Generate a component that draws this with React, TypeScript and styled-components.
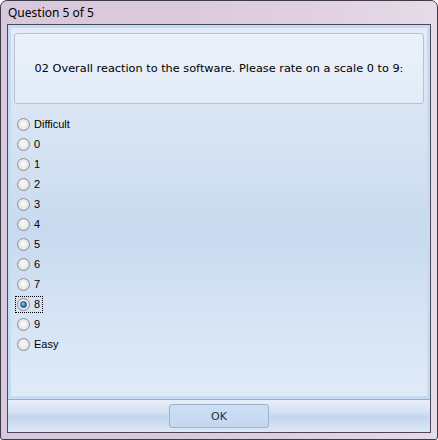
import React from "react";
import styled, { createGlobalStyle } from "styled-components";

const Global = createGlobalStyle`
  html, body { margin: 0; padding: 0; background: #ffffff; }
  body { width: 438px; height: 440px; overflow: hidden; }
`;

const Window = styled.div`
  box-sizing: border-box;
  width: 438px;
  height: 440px;
  border: 1px solid #3d3b45;
  border-radius: 7px 7px 3px 3px;
  background: linear-gradient(90deg, #d8c8de 0%, #dbc9da 40%, #e1d2e1 75%, #e6dbe8 100%);
  display: flex;
  flex-direction: column;
  padding: 0 6px 6px 6px;
  overflow: hidden;
`;

const TitleBar = styled.div`
  height: 23px;
  display: flex;
  align-items: center;
  padding-left: 1px;
  font-family: "Noto Sans", "Open Sans", sans-serif;
  font-size: 12px;
  color: #000;
`;

const Client = styled.div`
  flex: 1;
  border: 1px solid #4a4857;
  display: flex;
  flex-direction: column;
  min-height: 0;
`;

const Content = styled.div`
  box-sizing: border-box;
  height: 374px;
  border: 3px solid #c6dbf4;
  background: linear-gradient(180deg, #e3ecf8 0%, #d6e3f3 30%, #c9daef 55%, #d6e4f5 80%, #e0ebf9 100%);
  padding: 5px 3px 0 3px;
  display: flex;
  flex-direction: column;
  font-family: "Liberation Sans", Arial, sans-serif;
  font-size: 11px;
  color: #000;
`;

const QuestionBox = styled.div`
  box-sizing: border-box;
  height: 71px;
  border: 1px solid #b9c2cd;
  border-radius: 3px;
  background: linear-gradient(180deg, #eaf1fa 0%, #e2ebf7 100%);
  display: flex;
  align-items: center;
  justify-content: center;
  font-family: "DejaVu Sans", Verdana, sans-serif;
  font-size: 11.3px;
  padding-bottom: 1px;
`;

const OptionList = styled.div`
  display: flex;
  flex-direction: column;
  margin-top: 10px;
`;

const OptionRow = styled.div`
  height: 20px;
  display: flex;
  align-items: center;
  padding-left: 1px;
`;

const FocusFrame = styled.div<{ $focused: boolean }>`
  display: flex;
  align-items: center;
  gap: 4px;
  height: 17px;
  padding: 0 2px 0 1px;
  box-sizing: border-box;
  border: 1px dotted ${(p) => (p.$focused ? "#000" : "transparent")};
`;

const Radio = styled.span<{ $checked: boolean }>`
  box-sizing: border-box;
  width: 13px;
  height: 13px;
  border-radius: 50%;
  border: 1px solid #8c8f93;
  background: radial-gradient(circle at 50% 45%, #fdfdfd 0%, #ececec 45%, #cfd0d2 100%);
  display: flex;
  align-items: center;
  justify-content: center;
  flex: none;

  &::after {
    content: "";
    display: ${(p) => (p.$checked ? "block" : "none")};
    width: 7px;
    height: 7px;
    box-sizing: border-box;
    border-radius: 50%;
    border: 1px solid #1b4d78;
    background: radial-gradient(circle at 40% 35%, #8fd6fb 0%, #2a8fd3 45%, #0b4f8c 100%);
  }
`;

const Label = styled.span`
  line-height: 13px;
`;

const Separator = styled.div`
  height: 1px;
  background: #a3acb8;
`;

const ButtonBar = styled.div`
  flex: 1;
  background: linear-gradient(180deg, #e6eef9 0%, #d6e3f3 35%, #c4d6ec 55%, #d3e1f2 80%, #dde8f6 100%);
  display: flex;
  align-items: center;
  justify-content: center;
`;

const OkButton = styled.button`
  box-sizing: border-box;
  width: 100px;
  height: 24px;
  border: 1px solid #98b3d6;
  border-radius: 3px;
  background: linear-gradient(180deg, #cfdff2 0%, #c3d7ef 100%);
  font-family: "DejaVu Sans", Verdana, sans-serif;
  font-size: 11px;
  color: #1b2f4f;
  padding: 0;
`;

const options = ["Difficult", "0", "1", "2", "3", "4", "5", "6", "7", "8", "9", "Easy"];

export default function App() {
  const selected = "8";
  return (
    <>
      <Global />
      <Window>
        <TitleBar>Question 5 of 5</TitleBar>
        <Client>
          <Content>
            <QuestionBox>02 Overall reaction to the software. Please rate on a scale 0 to 9:</QuestionBox>
            <OptionList>
              {options.map((o) => (
                <OptionRow key={o}>
                  <FocusFrame $focused={o === selected}>
                    <Radio $checked={o === selected} />
                    <Label>{o}</Label>
                  </FocusFrame>
                </OptionRow>
              ))}
            </OptionList>
          </Content>
          <Separator />
          <ButtonBar>
            <OkButton>OK</OkButton>
          </ButtonBar>
        </Client>
      </Window>
    </>
  );
}
